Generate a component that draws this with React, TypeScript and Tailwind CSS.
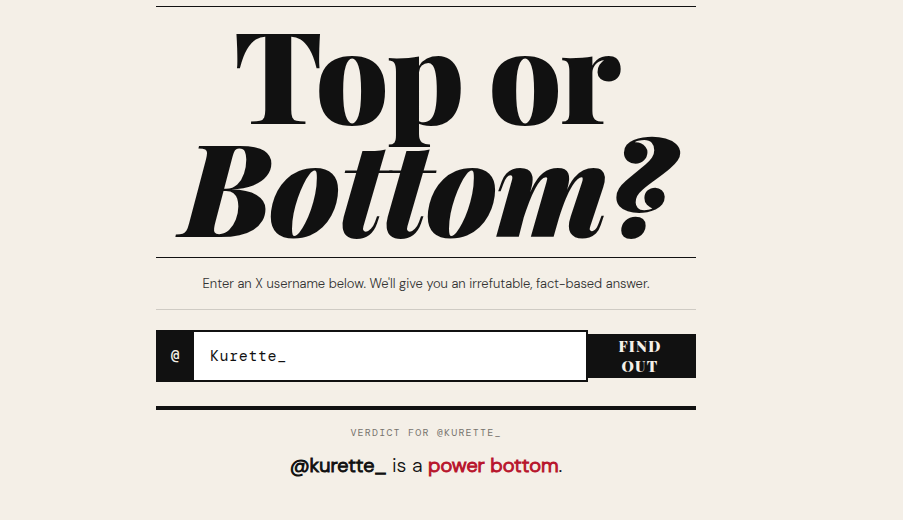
import { useState } from 'react'
import type { FormEvent } from 'react'

function Masthead() {
  return (
    <header className="border-y border-[#111111] pt-2 pb-4">
      <h1 className="text-center font-['Playfair_Display','Liberation_Serif',serif] text-[128px] leading-[113px] font-black tracking-[-0.02em] whitespace-nowrap">
        Top or
        <br />
        <em>Bottom?</em>
      </h1>
    </header>
  )
}

interface UsernameFormProps {
  value: string
  onChange: (value: string) => void
  onSubmit: () => void
}

function UsernameForm({ value, onChange, onSubmit }: UsernameFormProps) {
  const handleSubmit = (e: FormEvent) => {
    e.preventDefault()
    onSubmit()
  }

  return (
    <form onSubmit={handleSubmit} className="mt-5 flex items-center">
      <div className="flex min-w-0 flex-1 font-['DM_Mono','Liberation_Mono',monospace] text-[15px]">
        <label
          htmlFor="username"
          className="flex w-[38px] shrink-0 items-center justify-center bg-[#111111] font-medium text-[#f4efe7]"
        >
          @
        </label>
        <input
          id="username"
          type="text"
          value={value}
          onChange={(e) => onChange(e.target.value)}
          className="h-[52px] min-w-0 flex-1 border-2 border-l-0 border-[#111111] bg-white px-4 tracking-[0.04em] text-[#111111] outline-none"
        />
      </div>
      <button
        type="submit"
        className="w-[108px] shrink-0 cursor-pointer bg-[#111111] py-0.5 pr-7 pl-6 font-['Playfair_Display','Liberation_Serif',serif] text-[15px] leading-5 font-black tracking-[0.08em] text-[#f4efe7]"
      >
        FIND OUT
      </button>
    </form>
  )
}

function Verdict({ username }: { username: string }) {
  return (
    <section className="mt-6 border-t-4 border-[#111111] pt-[15px] text-center">
      <p className="font-['DM_Mono','Liberation_Mono',monospace] text-[10px] leading-4 tracking-[0.12em] text-[#77736d]">
        VERDICT FOR @{username.toUpperCase()}
      </p>
      <p className="mt-2.5 text-xl leading-7 font-light">
        <strong className="font-light [-webkit-text-stroke:1px]">@{username.toLowerCase()}</strong> is a{' '}
        <strong className="font-light text-[#b8152c] [-webkit-text-stroke:1px]">power bottom</strong>.
      </p>
    </section>
  )
}

export default function App() {
  const [username, setUsername] = useState('Kurette_')
  const [submitted, setSubmitted] = useState('Kurette_')

  return (
    <div className="min-h-screen bg-[#f4efe7] pt-1.5 pr-[51px] font-['DM_Sans','Inter',sans-serif] text-[#111111]">
      <main className="mx-auto max-w-[540px]">
        <Masthead />
        <p className="border-b border-[#cfcbc4] py-4 text-center text-[13px] leading-[19px] font-light text-[#333333]">
          Enter an X username below. We'll give you an irrefutable, fact-based answer.
        </p>
        <UsernameForm
          value={username}
          onChange={setUsername}
          onSubmit={() => setSubmitted(username)}
        />
        <Verdict username={submitted} />
      </main>
    </div>
  )
}
